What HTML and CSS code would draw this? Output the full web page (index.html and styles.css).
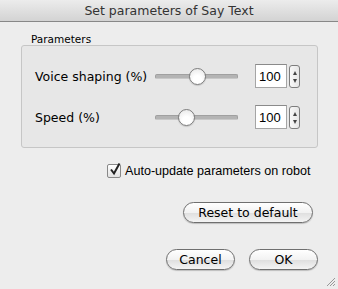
FILE: index.html
```html
<!DOCTYPE html>
<html lang="en">

<head>
    <meta charset="UTF-8">
    <title>Set parameters of Say Text</title>
    <link rel="stylesheet" href="styles.css">
</head>

<body>
    <div class="window">
        <!-- Title bar -->
        <div class="titlebar">Set parameters of Say Text</div>

        <div class="legend">Parameters</div>
        <div class="group">
            <div class="param-row">
                <span class="param-label">Voice shaping (%)</span>
                <div class="slider">
                    <div class="track"></div>
                    <div class="knob" style="left: 34px;"></div>
                </div>
                <input class="num-field" type="text" value="100">
                <div class="stepper"><span class="up"></span><span class="down"></span></div>
            </div>
            <div class="param-row">
                <span class="param-label">Speed (%)</span>
                <div class="slider">
                    <div class="track"></div>
                    <div class="knob" style="left: 23px;"></div>
                </div>
                <input class="num-field" type="text" value="100">
                <div class="stepper"><span class="up"></span><span class="down"></span></div>
            </div>
        </div>

        <label class="check-row">
            <span class="checkbox">
                <svg width="14" height="14" viewBox="0 0 14 14">
                    <path d="M3 6.5 L6 10.5 L11.5 0.5" fill="none" stroke="#222" stroke-width="2" />
                </svg>
            </span>
            Auto-update parameters on robot
        </label>

        <div class="reset-row">
            <button class="btn btn-reset">Reset to default</button>
        </div>

        <div class="button-row">
            <button class="btn btn-small">Cancel</button>
            <button class="btn btn-small">OK</button>
        </div>

        <!-- resize grip -->
        <svg class="grip" width="12" height="12" viewBox="0 0 12 12">
            <path d="M11 3 L3 11 M11 6 L6 11 M11 9 L9 11" stroke="#999" stroke-width="1" />
        </svg>
    </div>
</body>

</html>
```

FILE: styles.css
```css
body {
    margin: 0;
    padding: 0;
    background: #ededed;
    font-family: "DejaVu Sans", sans-serif;
    color: #000;
}

.window {
    position: relative;
    width: 338px;
    height: 289px;
    overflow: hidden;
}

.titlebar {
    height: 21px;
    line-height: 21px;
    text-align: center;
    font-size: 12.5px;
    color: #333;
    background: linear-gradient(to bottom, #ececec, #d3d3d3);
    border-bottom: 1px solid #888;
}

.legend {
    margin-top: 11px;
    padding-left: 31px;
    font-size: 10.5px;
    line-height: 12px;
    height: 12px;
}

.group {
    margin-left: 21px;
    width: 297px;
    height: 103px;
    box-sizing: border-box;
    padding: 18px 0 0 13px;
    border: 1px solid #c6c6c6;
    border-radius: 3px;
    background: #e7e7e7;
}

.param-row {
    display: flex;
    align-items: center;
    height: 24px;
    margin-bottom: 17px;
}

.param-label {
    width: 120px;
    font-size: 12.5px;
}

.slider {
    position: relative;
    width: 83px;
    height: 18px;
    margin-right: 17px;
}

.track {
    position: absolute;
    left: 0;
    right: 0;
    top: 7px;
    height: 3px;
    border-radius: 2px;
    background: #b4b4b4;
    border: 1px solid #a0a0a0;
    border-bottom-color: #c8c8c8;
}

.knob {
    position: absolute;
    top: 1px;
    width: 15px;
    height: 15px;
    border-radius: 50%;
    border: 1px solid #7d7d7d;
    background: radial-gradient(circle at 50% 70%, #ffffff 30%, #e4e4e4 100%);
    box-shadow: 0 1px 1px rgba(0, 0, 0, 0.15);
}

.num-field {
    width: 32px;
    height: 24px;
    box-sizing: border-box;
    margin: 0 2px 0 0;
    padding: 0 0 0 3px;
    border: 1px solid #a5a5a5;
    border-top-color: #8a8a8a;
    background: #fff;
    font-family: "Liberation Sans", sans-serif;
    font-size: 13px;
    color: #000;
    outline: none;
}

.stepper {
    width: 11px;
    height: 23px;
    box-sizing: border-box;
    border: 1px solid #7d7d7d;
    border-radius: 3px;
    background: linear-gradient(to right, #f8f8f8, #e6e6e6);
    display: flex;
    flex-direction: column;
    align-items: center;
    justify-content: space-between;
    padding: 5px 0 4px;
}

.stepper .up {
    width: 0;
    height: 0;
    border-left: 2.5px solid transparent;
    border-right: 2.5px solid transparent;
    border-bottom: 4px solid #444;
}

.stepper .down {
    width: 0;
    height: 0;
    border-left: 2.5px solid transparent;
    border-right: 2.5px solid transparent;
    border-top: 4px solid #444;
}

.check-row {
    display: flex;
    align-items: center;
    margin: 16px 0 0 107px;
    height: 14px;
    font-family: "Liberation Sans", sans-serif;
    font-size: 12.6px;
    gap: 4px;
}

.checkbox {
    width: 14px;
    height: 14px;
    box-sizing: border-box;
    border: 1px solid #888;
    border-radius: 2px;
    background: linear-gradient(to bottom, #ffffff, #e2e2e2);
    position: relative;
}

.checkbox svg {
    position: absolute;
    left: 0;
    top: -2px;
}

.reset-row {
    display: flex;
    justify-content: flex-end;
    padding-right: 25px;
    margin-top: 24px;
}

.button-row {
    display: flex;
    justify-content: flex-end;
    gap: 14px;
    padding-right: 20px;
    margin-top: 26px;
}

.btn {
    height: 21px;
    box-sizing: border-box;
    border: 1px solid #6f6f6f;
    border-radius: 11px;
    background: linear-gradient(to bottom, #ffffff 0%, #f2f2f2 50%, #dedede 51%, #f4f4f4 100%);
    font-family: "DejaVu Sans", sans-serif;
    font-size: 12.5px;
    color: #000;
    padding: 0;
    box-shadow: 0 1px 1px rgba(0, 0, 0, 0.2);
}

.btn-reset {
    width: 130px;
}

.btn-small {
    width: 69px;
}

.grip {
    position: absolute;
    right: 2px;
    bottom: 2px;
}
```
